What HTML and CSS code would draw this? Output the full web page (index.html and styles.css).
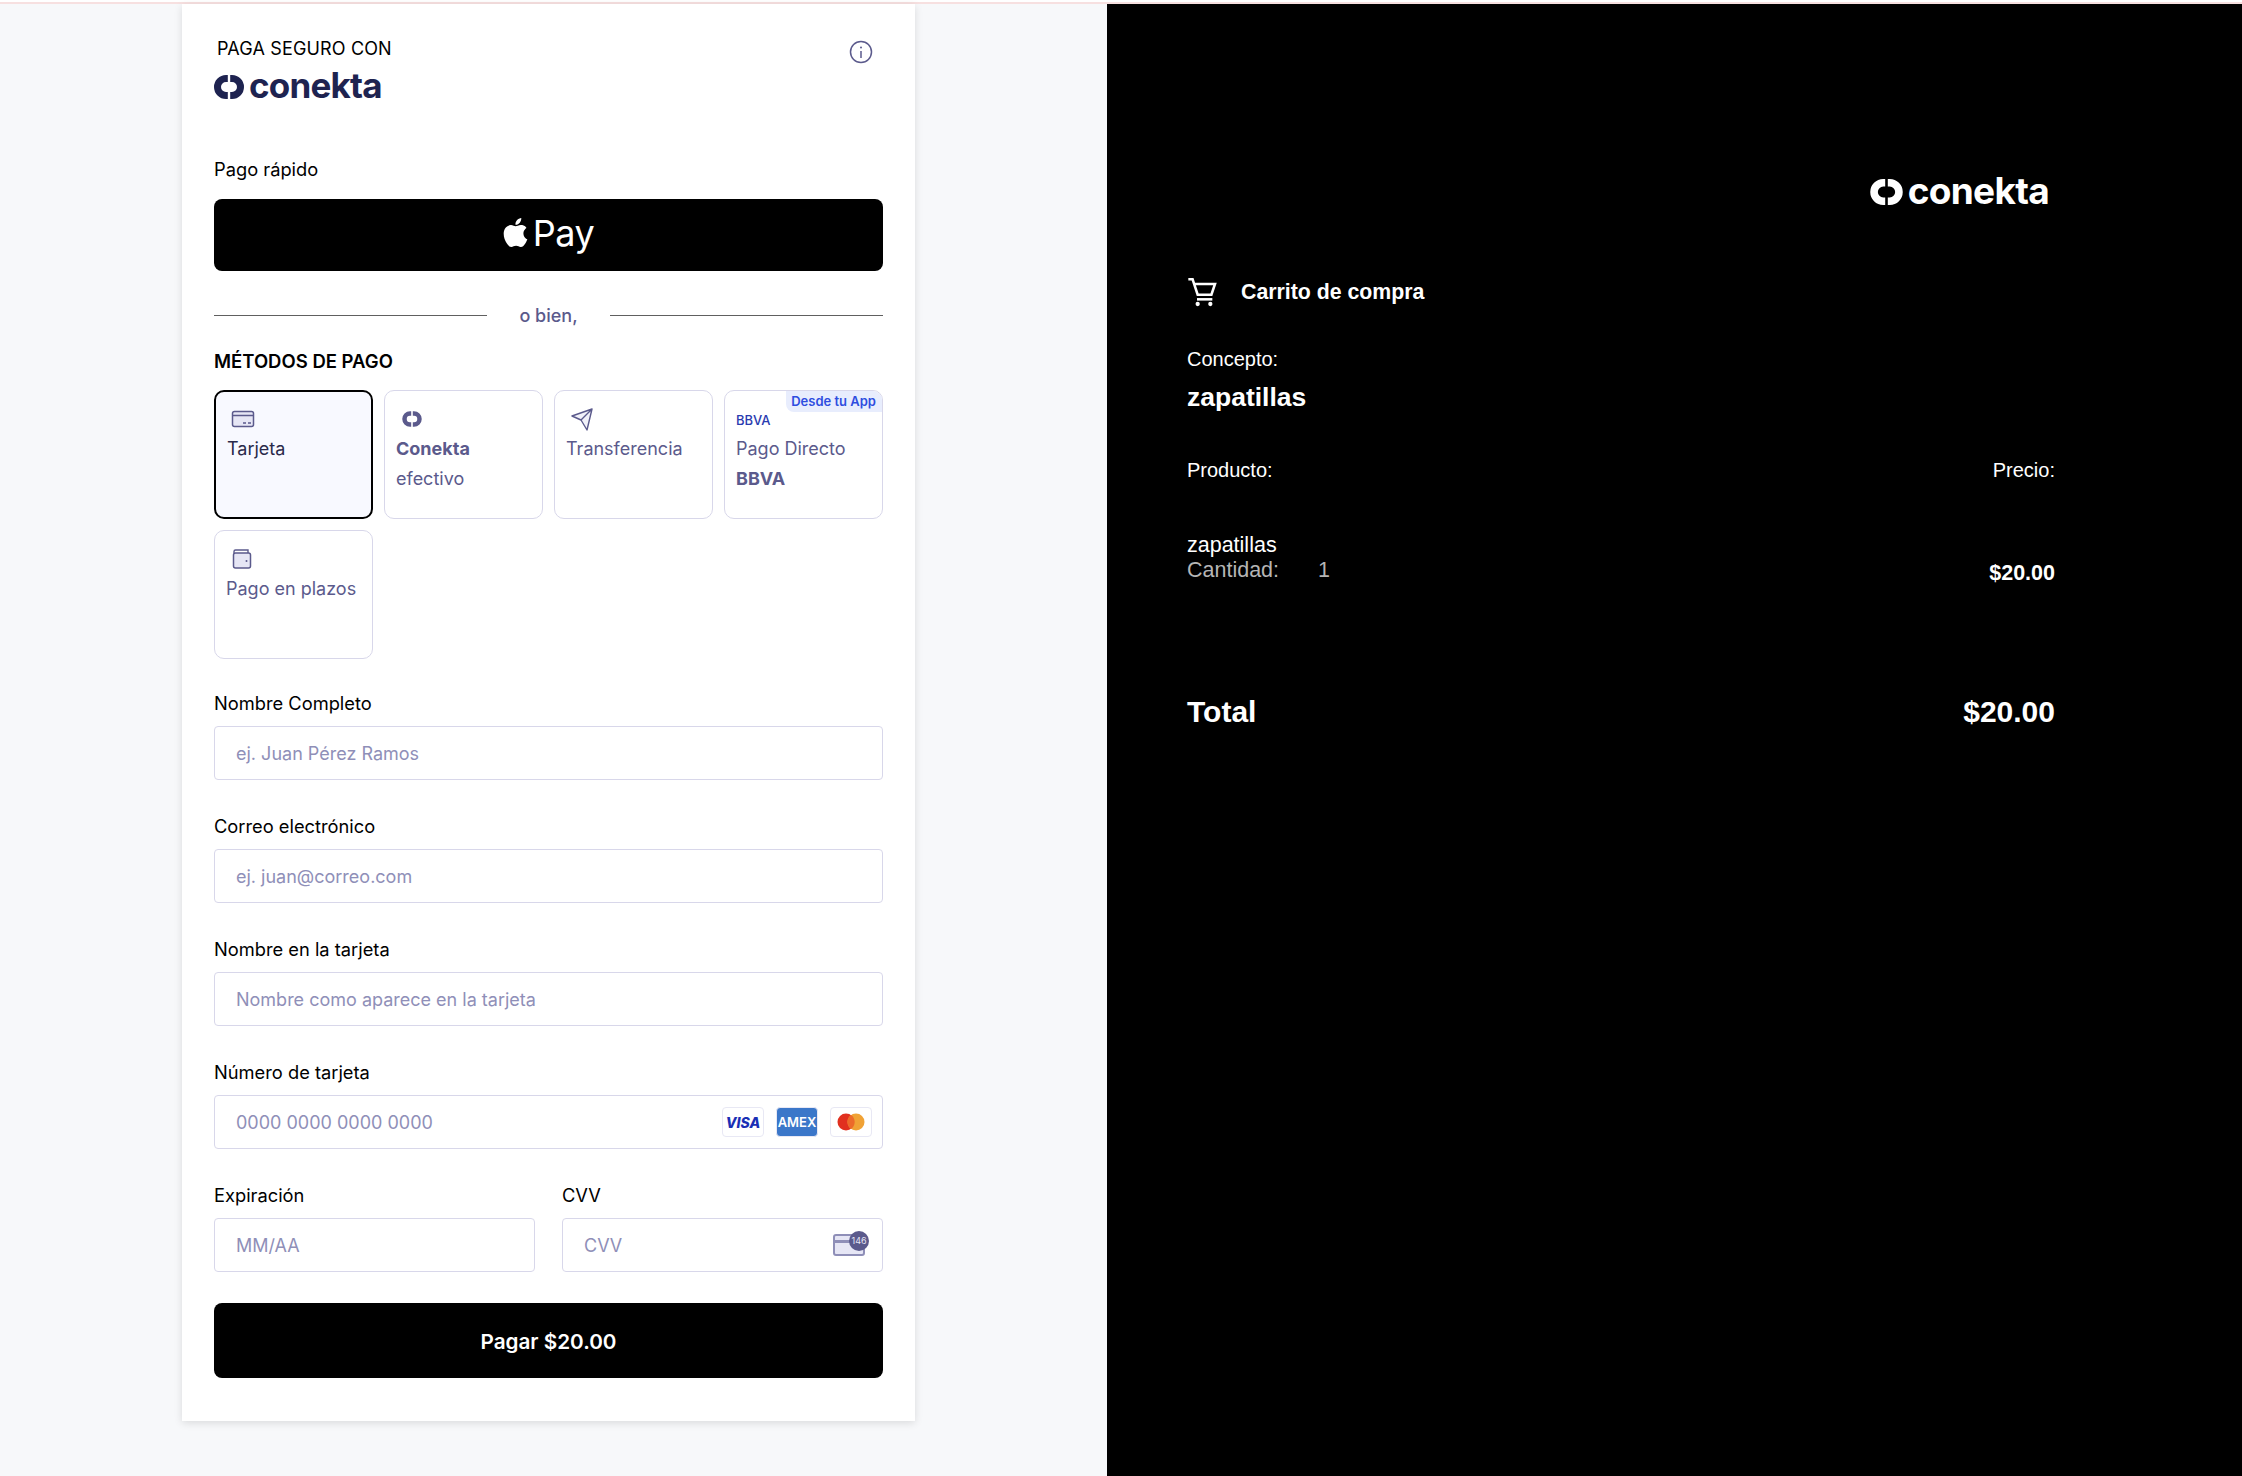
FILE: index.html
```html
<!DOCTYPE html>
<html lang="es">
<head>
    <meta charset="UTF-8">
    <title>Conekta</title>
    <link rel="stylesheet" href="styles.css">
</head>
<body>
<div class="stripe"></div>
<div class="page">
    <div class="left">
        <div class="card">
            <div class="head">
                <div>
                    <div class="secure">PAGA SEGURO CON</div>
                    <div class="logo">
                        <svg class="mark" viewBox="0 0 30 24"><path d="M13.800 3.500H12a8.500 8.500 0 0 0 0 17h1.800M16.200 3.500H18a8.500 8.500 0 0 1 0 17h-1.800" fill="none" stroke="#1e2350" stroke-width="7"/></svg>
                        <span class="word">conekta</span>
                    </div>
                </div>
                <svg class="info" viewBox="0 0 24 24" width="24" height="24"><circle cx="12" cy="12" r="10.500" fill="none" stroke="#5b5a8c" stroke-width="1.500"/><circle cx="12" cy="7.500" r="1" fill="#5b5a8c"/><path d="M12 11v7" stroke="#5b5a8c" stroke-width="1.500"/></svg>
            </div>

            <div class="label fast">Pago rápido</div>
            <div class="apple">
                <svg viewBox="0 0 24 24" width="29" height="29"><path fill="#fff" d="M12.152 6.896c-.948 0-2.415-1.078-3.960-1.040-2.040.027-3.910 1.183-4.961 3.014-2.117 3.675-.546 9.103 1.519 12.090 1.013 1.454 2.208 3.090 3.792 3.039 1.520-.065 2.090-.987 3.935-.987 1.831 0 2.350.987 3.960.948 1.637-.026 2.676-1.480 3.676-2.948 1.156-1.688 1.636-3.325 1.662-3.415-.039-.013-3.182-1.221-3.220-4.857-.026-3.040 2.480-4.494 2.597-4.559-1.429-2.090-3.623-2.324-4.390-2.376-2-.156-3.675 1.090-4.610 1.090zM15.530 3.830c.843-1.012 1.400-2.427 1.245-3.830-1.207.052-2.662.805-3.532 1.818-.780.896-1.454 2.338-1.273 3.714 1.338.104 2.715-.688 3.559-1.701"/></svg>
                <span>Pay</span>
            </div>

            <div class="divider"><i></i><span>o bien,</span><i></i></div>
            <div class="label title">MÉTODOS DE PAGO</div>

            <div class="methods">
                <div class="method select">
                    <svg class="m-icon" viewBox="0 0 24 24" width="24" height="24"><rect x="1.500" y="4.500" width="21" height="15" rx="2" fill="#e6e6f5" stroke="#5b5a8c" stroke-width="1.500"/><path d="M2 8.500h20" stroke="#5b5a8c" stroke-width="1.500"/><path d="M12 16h3M17 16h3" stroke="#5b5a8c" stroke-width="1.300"/></svg>
                    <div class="dark">Tarjeta</div>
                </div>
                <div class="method">
                    <svg class="m-icon" viewBox="0 0 24 24" width="24" height="24"><path d="M11.200 6.500H10a5.500 5.500 0 0 0 0 11h1.200M12.800 6.500H14a5.500 5.500 0 0 1 0 11h-1.200" fill="none" stroke="#5b5a8c" stroke-width="4.500"/></svg>
                    <div><b>Conekta</b></div>
                    <div>efectivo</div>
                </div>
                <div class="method">
                    <svg class="m-icon" viewBox="0 0 24 24" width="24" height="24"><path d="M22 2 2 9l9 4 6 10zM22 2 11 13" fill="#f1f1f9" stroke="#5b5a8c" stroke-width="1.400" stroke-linejoin="round"/></svg>
                    <div>Transferencia</div>
                </div>
                <div class="method">
                    <span class="badge">Desde tu App</span>
                    <div class="bbva">BBVA</div>
                    <div>Pago Directo</div>
                    <div><b>BBVA</b></div>
                </div>
                <div class="method">
                    <svg class="m-icon" viewBox="0 0 24 24" width="24" height="24"><path d="M4 6V4.500C4 3.500 4.800 3 5.500 3H18v3" fill="none" stroke="#5b5a8c" stroke-width="1.400"/><rect x="3.500" y="6" width="17" height="15" rx="2" fill="#e6e6f5" stroke="#5b5a8c" stroke-width="1.500"/><circle cx="16.500" cy="14" r="1" fill="#5b5a8c"/></svg>
                    <div>Pago en plazos</div>
                </div>
            </div>

            <div class="field">
                <div class="label">Nombre Completo</div>
                <div class="input">ej. Juan Pérez Ramos</div>
            </div>
            <div class="field">
                <div class="label">Correo electrónico</div>
                <div class="input">ej. juan@correo.com</div>
            </div>
            <div class="field">
                <div class="label">Nombre en la tarjeta</div>
                <div class="input">Nombre como aparece en la tarjeta</div>
            </div>
            <div class="field">
                <div class="label">Número de tarjeta</div>
                <div class="input">
                    <span>0000 0000 0000 0000</span>
                    <div class="brands">
                        <span class="brand visa">VISA</span>
                        <span class="brand amex">AMEX</span>
                        <span class="brand"><svg viewBox="0 0 28 18" width="28" height="18"><circle cx="9" cy="9" r="8.500" fill="#e1301f"/><circle cx="19" cy="9" r="8.500" fill="#f0a235"/><path d="M14 2a8.500 8.500 0 0 1 0 14 8.500 8.500 0 0 1 0-14" fill="#ec6a2a"/></svg></span>
                    </div>
                </div>
            </div>
            <div class="row">
                <div class="field">
                    <div class="label">Expiración</div>
                    <div class="input">MM/AA</div>
                </div>
                <div class="field">
                    <div class="label">CVV</div>
                    <div class="input cvv-input">
                        <span>CVV</span>
                        <div class="cvv">
                            <svg viewBox="0 0 32 22" width="32" height="22"><rect x="1" y="1" width="30" height="20" rx="2" fill="#e6e6f5" stroke="#8f8fb8" stroke-width="2"/><path d="M1 7.500h30" stroke="#8f8fb8" stroke-width="3"/></svg>
                            <span class="cvv-num">146</span>
                        </div>
                    </div>
                </div>
            </div>
            <div class="pay">Pagar $20.00</div>
        </div>
    </div>

    <div class="right">
        <div class="logo r-logo">
            <svg class="mark" viewBox="0 0 30 24"><path d="M13.800 3.500H12a8.500 8.500 0 0 0 0 17h1.800M16.200 3.500H18a8.500 8.500 0 0 1 0 17h-1.800" fill="none" stroke="#fff" stroke-width="7"/></svg>
            <span class="word">conekta</span>
        </div>
        <div class="cart">
            <svg viewBox="0 0 24 24" width="32" height="32"><path d="M1 2.500h3.200l3.800 11.500h10.300l2.700-8H5.500" fill="none" stroke="#fff" stroke-width="1.900"/><path d="M7.500 17.500h11.500" stroke="#fff" stroke-width="1.900"/><circle cx="8" cy="21" r="1.600" fill="#fff"/><circle cx="17.500" cy="21" r="1.600" fill="#fff"/></svg>
            <span>Carrito de compra</span>
        </div>
        <div class="concept">Concepto:</div>
        <div class="concept-name">zapatillas</div>
        <div class="between heads">
            <span>Producto:</span>
            <span>Precio:</span>
        </div>
        <div class="between item">
            <div>
                <div class="item-name">zapatillas</div>
                <div class="qty"><span>Cantidad:</span><span>1</span></div>
            </div>
            <b class="price">$20.00</b>
        </div>
        <div class="between total">
            <span>Total</span>
            <span>$20.00</span>
        </div>
    </div>
</div>
</body>
</html>
```

FILE: styles.css
```css
*{
    padding: 0;
    margin: 0;
    box-sizing: border-box;
}
html,body{
    height: 100%;
    background: #fff;
}
body{
    overflow: hidden;
    font-family: "Inter", "Liberation Sans", sans-serif;
    color: #000;
}
.stripe{
    height: 4px;
    border-top: 2px solid #fff;
    background: #f7e0e0;
}
.page{
    display: flex;
    height: 1472px;
}
.left{
    width: 1107px;
    background: #f7f8fa;
    padding-left: 182px;
}
.right{
    flex: 1;
    background: #000;
    color: #fff;
    padding: 170px 187px 0 80px;
    font-family: "Liberation Sans", sans-serif;
}
.card{
    width: 733px;
    height: 1417px;
    padding: 30px 32px 0;
    background: #fff;
    box-shadow: 0 2px 8px rgba(0,0,0,.12);
}
.head{
    display: flex;
    justify-content: space-between;
    padding-right: 10px;
    height: 124px;
}
.secure{
    font-size: 18px;
    letter-spacing: .15px;
    line-height: 30px;
    padding-left: 3px;
}
.logo{
    display: flex;
    align-items: center;
    gap: 5px;
    height: 32px;
    margin-top: 5px;
}
.mark{
    width: 30px;
    height: 24px;
    margin-top: 3px;
}
.word{
    font-size: 35px;
    font-weight: 700;
    letter-spacing: -.8px;
    color: #1e2350;
}
.info{
    margin-top: 6px;
}
.label{
    font-size: 18.300px;
    line-height: 22px;
}
.apple{
    display: flex;
    align-items: center;
    justify-content: center;
    gap: 3px;
    height: 72px;
    margin-top: 19px;
    padding: 0 2px 5px 0;
    background: #000;
    border-radius: 8px;
    color: #fff;
    font-size: 36px;
    letter-spacing: -.5px;
}
.divider{
    display: flex;
    align-items: center;
    height: 24px;
    margin-top: 32px;
    color: #5b5a8c;
    font-size: 18px;
    font-weight: 500;
}
.divider i{
    flex: 1;
    height: 1px;
    background: #606060;
}
.divider span{
    width: 123px;
    text-align: center;
}
.title{
    margin-top: 23px;
    font-size: 18.500px;
    font-weight: 600;
}
.methods{
    display: grid;
    grid-template-columns: repeat(4,1fr);
    gap: 11px;
    margin-top: 18px;
}
.method{
    position: relative;
    height: 129px;
    padding: 16px 11px 0;
    border: 1px solid #d8d7ea;
    border-radius: 10px;
    color: #5b5a8c;
    font-size: 18px;
    line-height: 30px;
    overflow: hidden;
}
.method.select{
    padding-top: 15px;
    border: 2px solid #000;
    background: #f8f9ff;
}
.method b{
    font-weight: 700;
}
.dark{
    color: #2a2a4a;
}
.m-icon{
    display: block;
    margin: 0 0 3px 4px;
    height: 24px;
}
.badge{
    position: absolute;
    top: 0;
    right: 0;
    padding: 0 6px 0 5px;
    background: #e8edfd;
    border-bottom-left-radius: 8px;
    color: #2f4de0;
    font-size: 13px;
    font-weight: 600;
    line-height: 21px;
}
.bbva{
    height: 24px;
    margin-bottom: 3px;
    padding-top: 1px;
    line-height: 24px;
    color: #2a3bb0;
    font-size: 13px;
    font-weight: 500;
}
.methods + .field{
    margin-top: 33px;
}
.field + .field,.field + .row{
    margin-top: 35px;
}
.row .field + .field{
    margin-top: 0;
}
.input{
    display: flex;
    align-items: center;
    justify-content: space-between;
    height: 54px;
    margin-top: 12px;
    padding: 0 10px 0 21px;
    border: 1px solid #d8d7ea;
    border-radius: 4px;
    color: #8f8fb8;
    font-size: 18px;
}
.brands{
    display: flex;
    gap: 12px;
}
.brand{
    display: flex;
    align-items: center;
    justify-content: center;
    width: 42px;
    height: 30px;
    border: 1px solid #e8e8f4;
    border-radius: 4px;
}
.visa{
    color: #1a2fb5;
    font-size: 14px;
    font-weight: 800;
    font-style: italic;
}
.amex{
    background: #3b77c9;
    color: #fff;
    font-size: 13px;
    font-weight: 600;
}
.row{
    display: flex;
    justify-content: space-between;
}
.row .field{
    width: 321px;
}
.cvv-input{
    padding-right: 17px;
}
.cvv{
    position: relative;
    width: 32px;
    height: 22px;
}
.cvv svg{
    display: block;
}
.cvv-num{
    position: absolute;
    top: -3px;
    right: -4px;
    width: 20px;
    height: 20px;
    border-radius: 50%;
    background: #5b5a8c;
    color: #e6e6f5;
    font-size: 9px;
    line-height: 20px;
    text-align: center;
}
.pay{
    height: 75px;
    margin-top: 31px;
    background: #000;
    border-radius: 8px;
    color: #fff;
    font-size: 20.700px;
    font-weight: 600;
    line-height: 77px;
    text-align: center;
}
.r-logo{
    justify-content: flex-end;
    padding-right: 6px;
    margin-top: 0;
}
.r-logo .mark{
    width: 33px;
    height: 26px;
}
.r-logo .word{
    font-family: "Inter", "Liberation Sans", sans-serif;
    font-size: 37px;
    letter-spacing: -.7px;
    color: #fff;
}
.cart{
    display: flex;
    align-items: center;
    gap: 22px;
    margin-top: 66px;
    height: 40px;
    font-size: 21.300px;
    font-weight: 700;
}
.concept{
    margin-top: 35px;
    font-size: 20px;
    line-height: 24px;
}
.concept-name{
    margin-top: 11px;
    font-size: 26.500px;
    font-weight: 700;
    line-height: 30px;
}
.between{
    display: flex;
    justify-content: space-between;
}
.heads{
    margin-top: 46px;
    font-size: 20px;
    line-height: 24px;
}
.item{
    align-items: flex-end;
    margin-top: 51px;
    font-size: 21.500px;
}
.item-name{
    line-height: 24px;
}
.qty{
    display: flex;
    gap: 39px;
    color: #b5b5b5;
    line-height: 26px;
}
.price{
    margin-bottom: -3px;
    font-size: 21.500px;
    line-height: 26px;
}
.total{
    margin-top: 111px;
    font-size: 30px;
    font-weight: 700;
    line-height: 36px;
}
```
